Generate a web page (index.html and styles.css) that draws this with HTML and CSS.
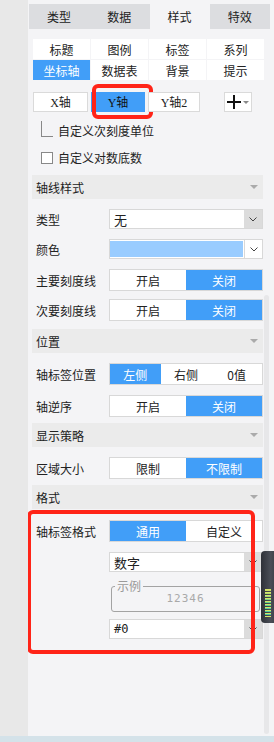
FILE: index.html
```html
<!DOCTYPE html>
<html lang="zh">
<head>
  <meta charset="UTF-8" />
  <title>坐标轴样式</title>
  <link rel="stylesheet" href="styles.css">
</head>
<body>
  <div class="app">
    <div class="side"></div>
    <div class="panel">
      <div class="tabs">
        <div class="tab">类型</div>
        <div class="tab">数据</div>
        <div class="tab active">样式</div>
        <div class="tab">特效</div>
      </div>

      <div class="body-area">
        <div class="content">
          <div class="subtabs">
            <div class="cell">标题</div>
            <div class="cell">图例</div>
            <div class="cell">标签</div>
            <div class="cell">系列</div>
            <div class="cell active">坐标轴</div>
            <div class="cell">数据表</div>
            <div class="cell">背景</div>
            <div class="cell">提示</div>
          </div>

          <div class="axes">
            <div class="axis axis-x">X轴</div>
            <div class="axis axis-y active">Y轴<span class="mark mark-y"></span></div>
            <div class="axis axis-y2">Y轴2</div>
            <div class="add-btn">
              <svg width="14" height="14" viewBox="0 0 14 14"><path d="M7 0v14M0 7h14" stroke="#111" stroke-width="2"/></svg>
              <span class="caret"></span>
            </div>
          </div>

          <label class="check check-first"><span class="box box-cut"></span>自定义次刻度单位</label>
          <label class="check check-second"><span class="box"></span>自定义对数底数</label>

          <div class="section">轴线样式<span class="tri"></span></div>
          <div class="row gap-10">
            <div class="label">类型</div>
            <div class="select">
              <div class="sel-val">无</div>
              <div class="sel-btn"><svg width="8" height="5" viewBox="0 0 8 5"><path d="M0.5 0.5L4 4L7.5 0.5" fill="none" stroke="#444"/></svg></div>
            </div>
          </div>
          <div class="row gap-10">
            <div class="label">颜色</div>
            <div class="select color">
              <div class="sel-val swatch"></div>
              <div class="sel-btn"><svg width="8" height="5" viewBox="0 0 8 5"><path d="M0.5 0.5L4 4L7.5 0.5" fill="none" stroke="#444"/></svg></div>
            </div>
          </div>
          <div class="row gap-10">
            <div class="label">主要刻度线</div>
            <div class="toggle"><span>开启</span><span class="on">关闭</span></div>
          </div>
          <div class="row gap-8">
            <div class="label">次要刻度线</div>
            <div class="toggle"><span>开启</span><span class="on">关闭</span></div>
          </div>

          <div class="section gap-8">位置<span class="tri"></span></div>
          <div class="row gap-10">
            <div class="label">轴标签位置</div>
            <div class="toggle"><span class="on">左侧</span><span>右侧</span><span>0值</span></div>
          </div>
          <div class="row gap-10">
            <div class="label">轴逆序</div>
            <div class="toggle"><span>开启</span><span class="on">关闭</span></div>
          </div>

          <div class="section gap-6">显示策略<span class="tri"></span></div>
          <div class="row gap-10">
            <div class="label">区域大小</div>
            <div class="toggle"><span>限制</span><span class="on">不限制</span></div>
          </div>

          <div class="section gap-6">格式<span class="tri"></span></div>
          <div class="fmt">
            <div class="row">
              <div class="label">轴标签格式</div>
              <div class="toggle"><span class="on">通用</span><span>自定义</span></div>
            </div>
            <div class="row gap-10">
              <div class="label"></div>
              <div class="select">
                <div class="sel-val">数字</div>
                <div class="sel-btn"><svg width="8" height="5" viewBox="0 0 8 5"><path d="M0.5 0.5L4 4L7.5 0.5" fill="none" stroke="#444"/></svg></div>
              </div>
            </div>
            <div class="row gap-7">
              <div class="label"></div>
              <fieldset class="sample">
                <legend>示例</legend>
                <div class="sample-num">12346</div>
              </fieldset>
            </div>
            <div class="row gap-7">
              <div class="label"></div>
              <div class="select">
                <div class="sel-val mono">#0</div>
                <div class="sel-btn"><svg width="8" height="5" viewBox="0 0 8 5"><path d="M0.5 0.5L4 4L7.5 0.5" fill="none" stroke="#444"/></svg></div>
              </div>
            </div>
            <div class="mark mark-fmt"></div>
            <div class="meter">
              <div class="meter-bars"></div>
            </div>
          </div>
        </div>
        <div class="scrollbar"></div>
      </div>
    </div>
  </div>
</body>
</html>
```

FILE: styles.css
```css
* {
  margin: 0;
  padding: 0;
  box-sizing: border-box;
}

body {
  width: 274px;
  height: 742px;
  overflow: hidden;
  font-family: "Noto Sans CJK SC", sans-serif;
  font-size: 12px;
  color: #222;
  background: #d4e2e9;
}

.app {
  display: flex;
  height: 736px;
}

.side {
  width: 28px;
  background: #e8e8e8;
}

.panel {
  flex: 1;
  display: flex;
  flex-direction: column;
  background: #f4f4f6;
  overflow: hidden;
}

/* top tabs */
.tabs {
  display: flex;
  width: 241px;
  height: 25px;
  margin: 4px 0 0 1px;
}

.tab {
  flex: 1;
  display: flex;
  align-items: center;
  justify-content: center;
  background: #dcdde0;
}

.tab.active { background: #f4f4f6; }

.body-area {
  display: flex;
  flex: 1;
}

.content {
  width: 235px;
  padding-left: 4px;
}

.scrollbar {
  width: 5px;
  height: 439px;
  margin: 266px 0 0 1px;
  border-radius: 3px;
  background: #e7e7e9;
}

/* sub tabs */
.subtabs {
  display: grid;
  grid-template-columns: repeat(4, 57px);
  grid-auto-rows: 20px;
  gap: 1px;
  margin: 10px 0 0 1px;
}

.cell {
  display: flex;
  align-items: center;
  justify-content: center;
  background: #fff;
}

.cell.active {
  background: #419ef8;
  color: #fff;
}

/* axis buttons */
.axes {
  display: flex;
  height: 20px;
  margin: 12px 0 0 1px;
  font-family: "Liberation Serif", "Noto Sans CJK SC", serif;
}

.axis {
  position: relative;
  display: flex;
  align-items: center;
  justify-content: center;
  background: #fff;
  border: 1px solid #dadada;
}

.axis-x { width: 55px; }
.axis-y { width: 54px; margin-left: 3px; }
.axis-y2 { width: 52px; margin-left: 3px; }

.axis.active {
  background: #419ef8;
  border-color: #419ef8;
  color: #111;
}

.add-btn {
  display: flex;
  align-items: center;
  justify-content: center;
  gap: 2px;
  width: 28px;
  margin-left: 24px;
  background: #fff;
  border: 1px solid #dadada;
}

.caret {
  border-left: 3px solid transparent;
  border-right: 3px solid transparent;
  border-top: 3px solid #888;
}

/* red annotation frames */
.mark {
  position: absolute;
  border: 4px solid #ff2418;
  border-radius: 6px;
  pointer-events: none;
}

.mark-y {
  left: 0;
  top: -9px;
  width: 61px;
  height: 35px;
}

.mark-fmt {
  left: -5px;
  top: 1px;
  width: 228px;
  height: 144px;
}

/* checkboxes */
.check {
  display: flex;
  align-items: center;
  gap: 5px;
  height: 21px;
  padding-left: 9px;
}

.check-first { margin-top: 8px; }
.check-second { margin-top: 6px; }

.box {
  width: 12px;
  height: 12px;
  border: 1px solid #888;
  background: #fff;
}

.box-cut {
  border-top: none;
  border-right: none;
  background: transparent;
  align-self: flex-end;
  height: 16px;
  margin-bottom: 4px;
}

/* section headers */
.section {
  display: flex;
  align-items: center;
  justify-content: space-between;
  height: 24px;
  margin-top: 7px;
  padding: 0 5px 0 4px;
  background: #ebebeb;
}

.tri {
  border-left: 4px solid transparent;
  border-right: 4px solid transparent;
  border-top: 4px solid #aaa;
}

/* rows */
.row {
  display: flex;
  align-items: center;
}

.gap-10 { margin-top: 10px; }
.gap-8 { margin-top: 8px; }
.gap-7 { margin-top: 7px; }
.gap-6 { margin-top: 6px; }

.label {
  width: 77px;
  padding-left: 4px;
  flex-shrink: 0;
}

.select {
  display: flex;
  width: 154px;
  height: 20px;
  background: #fff;
  border: 1px solid #d8d8d8;
}

.sel-val {
  flex: 1;
  display: flex;
  align-items: center;
  padding-left: 4px;
  font-size: 13px;
}

.sel-btn {
  display: flex;
  align-items: center;
  justify-content: center;
  width: 18px;
  background: #dcdcdc;
}

.select.color .swatch {
  margin: 1px 1px 1px 0;
  background: #99ccff;
}

.select.color .sel-btn {
  background: #fff;
  border-left: 1px solid #d8d8d8;
}

.mono {
  font-family: "DejaVu Sans Mono", monospace;
  font-size: 12px;
}

.toggle {
  display: flex;
  width: 154px;
  height: 22px;
  background: #fff;
  border: 1px solid #d8d8d8;
}

.toggle span {
  flex: 1;
  display: flex;
  align-items: center;
  justify-content: center;
}

.toggle .on {
  background: #419ef8;
  color: #fff;
}

/* format group */
.fmt {
  position: relative;
  padding-top: 11px;
  padding-bottom: 20px;
}

.sample {
  width: 149px;
  margin-left: 2px;
  padding: 0 0 6px;
  border: 1px solid #a3a3a3;
  border-radius: 3px;
  min-inline-size: 0;
}

.sample legend {
  margin-left: 3px;
  padding: 0 2px;
  line-height: 14px;
  color: #9a9a9a;
}

.sample-num {
  text-align: center;
  line-height: 12px;
  font-family: "DejaVu Sans Mono", monospace;
  font-size: 11px;
  color: #a9a9a9;
  letter-spacing: 1px;
}

.meter {
  position: absolute;
  left: 229px;
  top: 42px;
  width: 16px;
  height: 72px;
  padding: 38px 3px 6px 4px;
  border-radius: 4px;
  background: linear-gradient(90deg, #2e3138, #4a4e57 60%, #3a3d44);
}

.meter-bars {
  height: 28px;
  width: 6px;
  background: repeating-linear-gradient(180deg, #d6e46a 0 1px, transparent 1px 3px),
              linear-gradient(180deg, #d8e05c, #5fd38f 50%, #3fc8a4);
  -webkit-mask: repeating-linear-gradient(180deg, #000 0 2px, transparent 2px 3px);
}
```
